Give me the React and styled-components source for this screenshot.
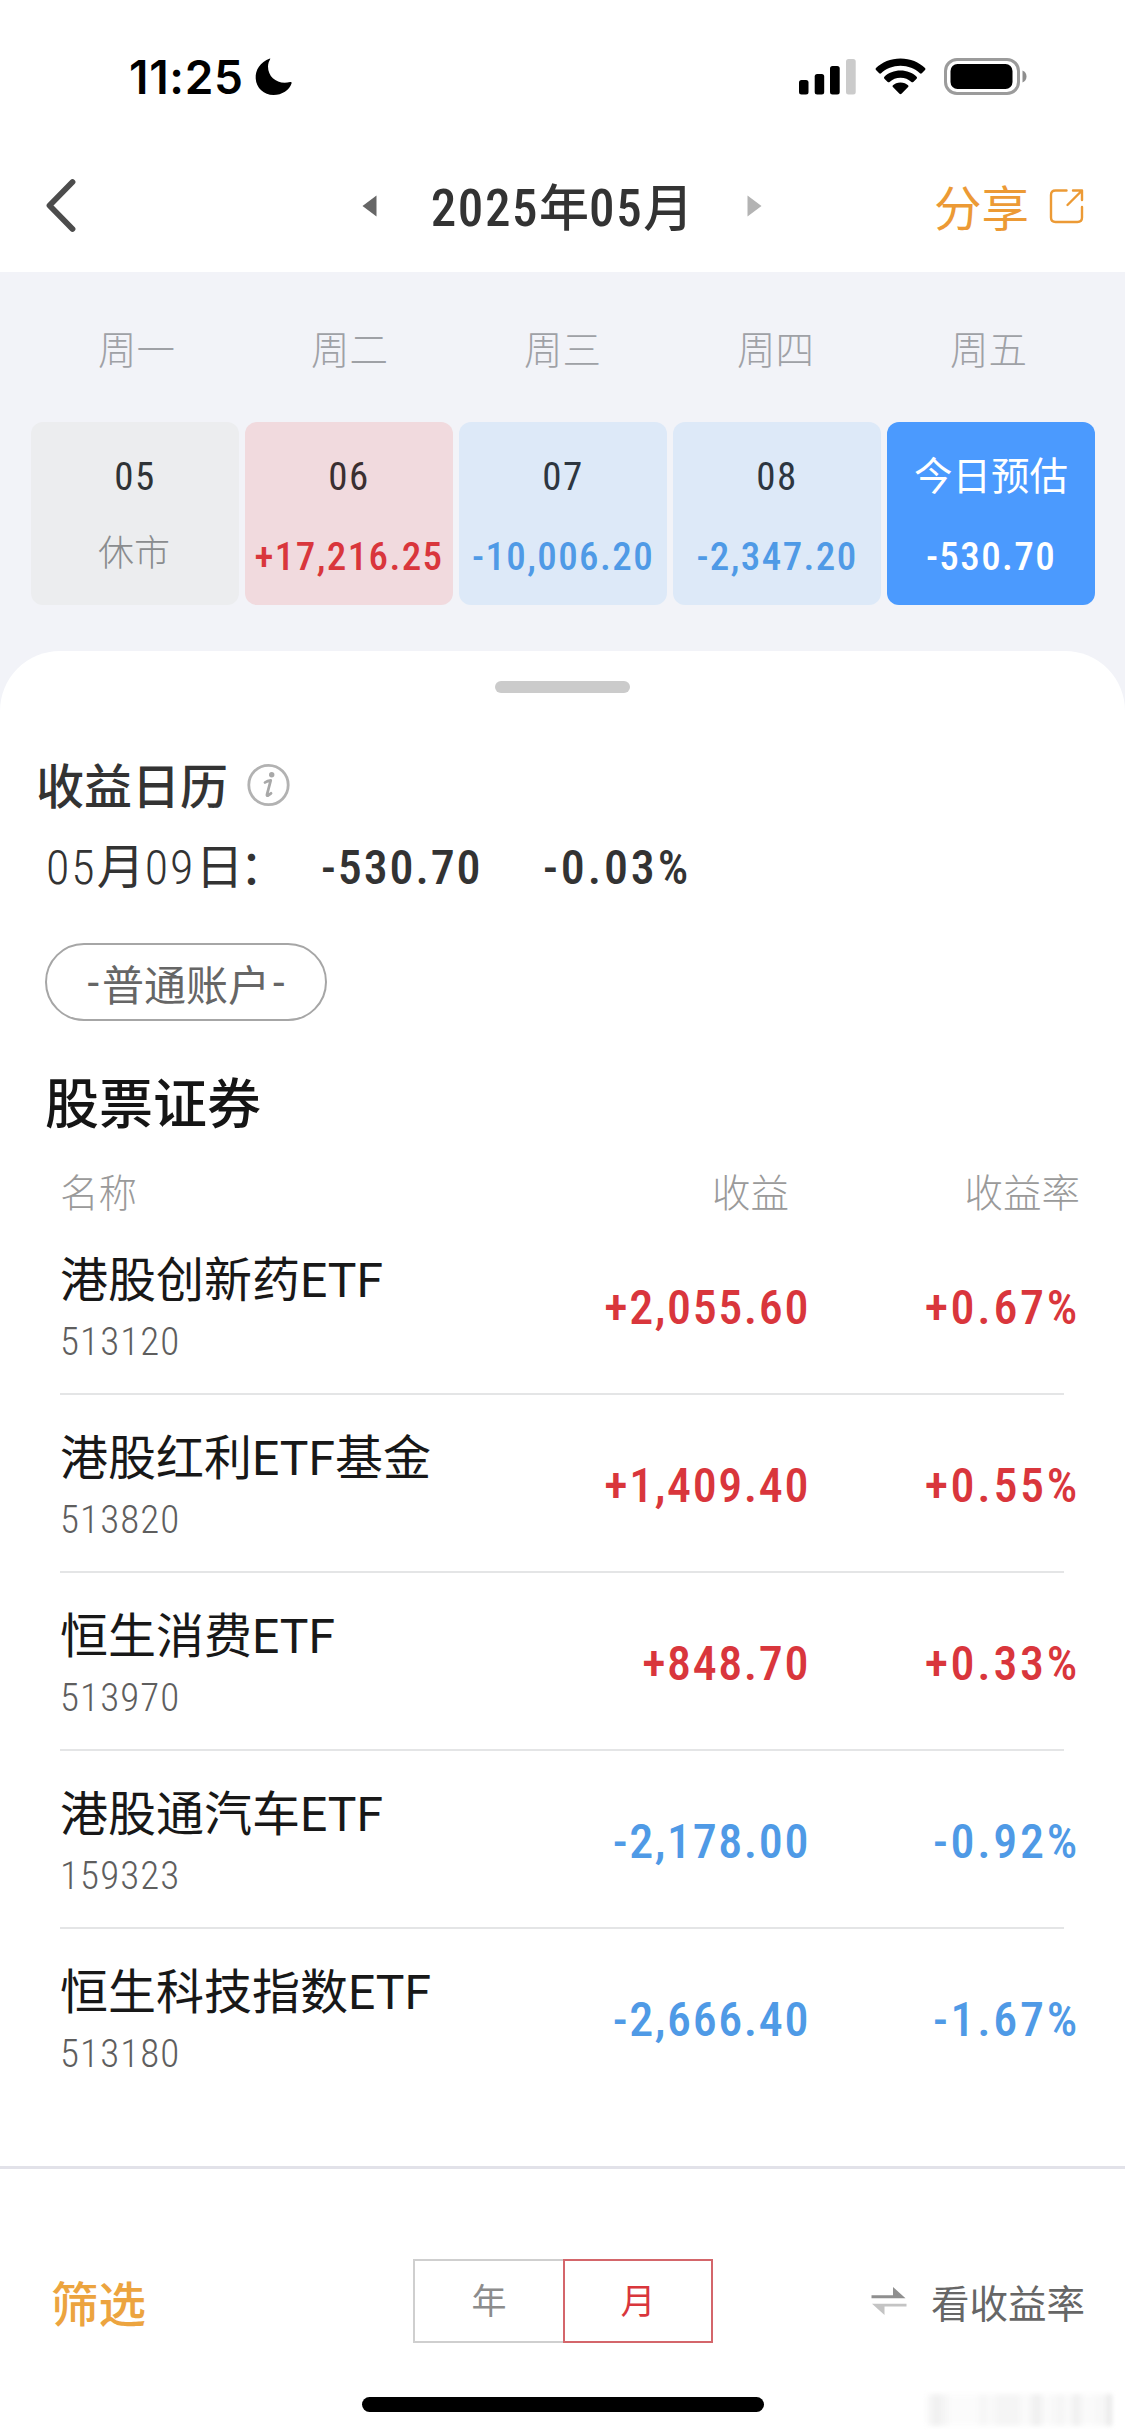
import React from "react";
import styled, { createGlobalStyle, css } from "styled-components";

const Global = createGlobalStyle`
  * { box-sizing: border-box; }
  body {
    margin: 0;
    background: #fff;
    font-family: Roboto, "Noto Sans CJK SC", sans-serif;
    white-space: nowrap;
  }
`;

const TONES = { up: "#d9363c", down: "#4f9ae6", white: "#fff" };

const Screen = styled.main`
  width: 1125px;
  height: 2436px;
  display: flex;
  flex-direction: column;
  overflow: hidden;
  background: #f2f3f8;
`;

const Num = styled.span`
  font-stretch: 75%;
  font-size: ${(p) => p.$size}px;
  font-weight: ${(p) => p.$weight || 500};
  letter-spacing: ${(p) => p.$track ?? 1.6}px;
  color: ${(p) => TONES[p.$tone] || "inherit"};
`;

/* Status bar */
const StatusBar = styled.header`
  height: 144px;
  padding: 9px 98px 0 129px;
  display: flex;
  align-items: center;
  justify-content: space-between;
  background: #fff;
`;
const Clock = styled.div`
  display: flex;
  align-items: center;
  gap: 11px;
  font: 600 46px/60px Inter, sans-serif;
  letter-spacing: 0.7px;
  color: #000;
`;
const Indicators = styled.div`
  display: flex;
  align-items: center;
`;

/* Navigation */
const NavBar = styled.nav`
  height: 128px;
  padding: 0 41px 4px 43px;
  display: grid;
  grid-template-columns: 319px 400px 1fr;
  align-items: center;
  background: #fff;
`;
const MonthPicker = styled.div`
  display: flex;
  align-items: center;
  justify-content: space-between;
`;
const MonthTitle = styled.h1`
  margin: 6px 0 0;
  font-size: 50px;
  font-weight: 500;
  line-height: 64px;
  color: #333;
`;
const Share = styled.div`
  display: flex;
  align-items: center;
  justify-content: flex-end;
  gap: 20px;
  font-size: 47.5px;
  line-height: 64px;
  color: #ec9a35;
`;
const ShareLabel = styled.span`
  padding-top: 7px;
`;

/* Week strip */
const Weekdays = styled.div`
  height: 150px;
  padding: 0 0 0 30px;
  display: grid;
  grid-template-columns: repeat(5, 213px);
  align-items: center;
  text-align: center;
  font-size: 38.5px;
  font-weight: 300;
  color: #9fa1a6;
`;
const Week = styled.div`
  padding: 0 30px 46px 31px;
  display: grid;
  grid-template-columns: repeat(5, 1fr);
  gap: 6px;
`;
const cardKinds = {
  closed: css`background: #ecedef; color: #2f3336;`,
  up: css`background: #f1dade; color: #3a2f31;`,
  down: css`background: #dde9f8; color: #2d3640;`,
  today: css`background: #4b9afe; color: #fff;`,
};
const DayCard = styled.div`
  height: 183px;
  padding-top: 30px;
  border-radius: 12px;
  display: flex;
  flex-direction: column;
  align-items: center;
  gap: 30px;
  line-height: 50px;
  font-size: 38.5px;
  ${(p) => cardKinds[p.$kind]}
`;
const Closed = styled.span`
  margin: -3px 2px 0 0;
  font-size: 36px;
  font-weight: 300;
  color: #8a8c8e;
`;

/* Sheet */
const Sheet = styled.section`
  flex: 1;
  padding-top: 30px;
  border-radius: 60px 60px 0 0;
  background: #fff;
  display: flex;
  flex-direction: column;
`;
const Handle = styled.div`
  width: 135px;
  height: 12px;
  border-radius: 6px;
  background: #cbcbcb;
  align-self: center;
`;
const Heading = styled.h2`
  margin: 65px 0 0 36px;
  display: flex;
  align-items: center;
  gap: 19px;
  font-size: 48px;
  font-weight: 500;
  line-height: 60px;
  color: #333;
`;
const Summary = styled.div`
  margin: 20px 0 0 46px;
  display: grid;
  grid-template-columns: 275px 222px auto;
  font-size: 48px;
  line-height: 60px;
  color: #333;
`;
const Colon = styled.span`
  margin-left: -4px;
`;
const Account = styled.div`
  width: 282px;
  height: 78px;
  margin: 45px 0 0 45px;
  border: 2px solid #a6a6a6;
  border-radius: 39px;
  display: flex;
  align-items: center;
  justify-content: center;
  gap: 3px;
  font-size: 42px;
  color: #666;
`;
const SectionTitle = styled.h3`
  margin: 50px 0 0 45px;
  font-size: 54px;
  font-weight: 500;
  line-height: 70px;
  color: #151515;
`;
const TableHead = styled.div`
  margin: 29px 45px 0 60px;
  display: grid;
  grid-template-columns: 1fr 200px 291px;
  font-size: 38.5px;
  font-weight: 300;
  line-height: 47px;
  color: #9a9a9a;
`;
const HeadCell = styled.span`
  text-align: right;
`;
const Row = styled.div`
  height: 176px;
  margin: 0 45px 0 60px;
  display: grid;
  grid-template-columns: 1fr 250px 270px;
  align-items: center;
  line-height: 60px;
`;
const Value = styled(Num)`
  padding-top: 5px;
  text-align: right;
`;
const Divider = styled.hr`
  width: 1004px;
  height: 2px;
  margin: 0 0 0 60px;
  border: 0;
  background: #e4e5e6;
`;
const Fund = styled.div`
  padding-top: 9px;
  display: flex;
  flex-direction: column;
  gap: 5px;
`;
const FundName = styled.span`
  font-size: 48px;
  line-height: 60px;
  color: #181818;
`;
const Code = styled(Num)`
  line-height: 52px;
  color: #5e5e5e;
`;

/* Footer */
const Footer = styled.footer`
  height: 270px;
  border-top: 3px solid #e2e2e9;
  background: #fff;
  display: flex;
  flex-direction: column;
  align-items: center;
`;
const Toolbar = styled.div`
  width: 100%;
  height: 228px;
  padding: 36px 40px 0 51px;
  display: grid;
  grid-template-columns: 362px 300px 1fr;
  align-items: center;
`;
const Filter = styled.span`
  font-size: 47.5px;
  font-weight: 500;
  color: #eca43f;
`;
const Toggle = styled.div`
  display: grid;
  grid-template-columns: 1fr 1fr;
  height: 84px;
`;
const ToggleItem = styled.button`
  padding: 4px 0 0;
  border: 2px solid ${(p) => (p.$on ? "#d4666b" : "#cfcfcf")};
  ${(p) => !p.$on && "border-right: 0;"}
  background: #fff;
  font: 400 35px/60px Roboto, "Noto Sans CJK SC", sans-serif;
  color: ${(p) => (p.$on ? "#d9363c" : "#8c8c8c")};
`;
const RateSwitch = styled.div`
  display: flex;
  align-items: center;
  justify-content: flex-end;
  gap: 24px;
  font-size: 38.5px;
  color: #666;
`;
const HomeBar = styled.div`
  width: 402px;
  height: 15px;
  border-radius: 8px;
  background: #000;
`;
const Smudge = styled.div`
  position: absolute;
  left: 924px;
  top: 2394px;
  width: 188px;
  height: 32px;
  opacity: 0.6;
  filter: blur(2px);
  background: linear-gradient(90deg, #fff 0, #e6e6e6 12px, #fafafa 28px, #fafafa 50px, #f1f1f1 60px, #f8f8f8 66px, #efefef 76px, #efefef 92px, #fafafa 102px, #e4e4e4 113px, #fafafa 122px, #efefef 138px, #fafafa 144px, #e6e6e6 152px, #fafafa 162px, #f2f2f2 180px, #d8d8d8 187px);
`;

const Moon = () => (
  <svg width="38" height="38" viewBox="0 0 38 38">
    <path d="M15 0.5C5 4 0.3 12 0.7 20.500C1.200 30 9 37 18.500 37C27 37 34.500 32 36.600 25.200C36.800 24.300 36 23.700 35.100 24C23.500 27 13 20 13 8.500C13 5.700 14 3.500 15 1.600C15.400 0.700 15.400 0.300 15 0.500Z" fill="#000" />
  </svg>
);
const Signal = () => (
  <svg width="57" height="36" viewBox="0 0 57 36">
    <rect x="0" y="21" width="9.500" height="14.500" rx="2.500" />
    <rect x="15.700" y="15" width="9.500" height="20.500" rx="2.500" />
    <rect x="31" y="7" width="9.700" height="28.500" rx="2.500" />
    <rect x="47" y="0" width="9.700" height="35.500" rx="2.500" fill="#cbcbcb" />
  </svg>
);
const WifiArt = styled.svg`margin-left: 19px;`;
const Wifi = () => (
  <WifiArt width="51" height="37" viewBox="0 0 51 37">
    <path d="M25.500 0.500C35.300 0.500 44.200 4.300 50 10.100Q51 11.100 50 12.100L46.800 15.300Q45.900 16.200 44.900 15.300C39.900 10.600 33 7.800 25.500 7.800C18 7.800 11.100 10.600 6.100 15.300Q5.100 16.200 4.200 15.300L1 12.100Q0 11.100 1 10.100C6.800 4.300 15.700 0.500 25.500 0.500Z" />
    <path d="M25.500 12.600C31.900 12.600 37.600 15 41.600 18.700Q42.600 19.700 41.600 20.700L38.300 23.900Q37.400 24.800 36.400 23.900C33.500 21.400 29.700 19.800 25.500 19.800C21.300 19.800 17.500 21.400 14.600 23.900Q13.600 24.800 12.700 23.900L9.400 20.700Q8.400 19.700 9.400 18.700C13.400 15 19.100 12.600 25.500 12.600Z" />
    <path d="M25.500 24.500C28.700 24.500 31.300 25.600 33.100 27.300Q34 28.200 33.100 29.100L26.500 35.700Q25.500 36.600 24.500 35.700L17.900 29.100Q17 28.200 17.900 27.300C19.700 25.600 22.300 24.500 25.500 24.500Z" />
  </WifiArt>
);
const BatteryArt = styled.svg`margin-left: 18px;`;
const Battery = () => (
  <BatteryArt width="83" height="37" viewBox="0 0 83 37">
    <rect x="1.500" y="1.500" width="73" height="34" rx="11.500" fill="none" stroke="#9b9b9b" strokeWidth="3" />
    <rect x="6.500" y="6" width="62" height="25" rx="7" />
    <path d="M78.500 12.500C81 13.500 82.500 15.700 82.500 18.500S81 23.500 78.500 24.500Z" fill="#8e8e8e" />
  </BatteryArt>
);
const Back = () => (
  <svg width="36" height="58" viewBox="0 0 36 58">
    <path d="M29.500 5L6.500 28.500L29.500 52" fill="none" stroke="#4c4c4c" strokeWidth="5.800" strokeLinecap="round" strokeLinejoin="round" />
  </svg>
);
const Arrow = ({ flip }) => (
  <svg width="15" height="22" viewBox="0 0 15 22">
    <path d={flip ? "M0.500 0.500L14.500 11L0.500 21.500Z" : "M14.500 0.500L0.500 11L14.500 21.500Z"} fill={flip ? "#b3b3b3" : "#666"} />
  </svg>
);
const ShareIcon = () => (
  <svg width="35" height="36" viewBox="0 0 35 36" fill="none" stroke="#ec9a35" strokeWidth="2.400" strokeLinecap="round" strokeLinejoin="round">
    <path d="M17.500 2.500H6.500Q2 2.500 2 7V29.500Q2 34 6.500 34H28.500Q33 34 33 29.500V19" />
    <path d="M24 2.500H33V12M33 2.500L18.500 17" />
  </svg>
);
const InfoArt = styled.svg`margin-bottom: 7px;`;
const Info = () => (
  <InfoArt width="43" height="44" viewBox="0 0 43 44">
    <circle cx="21.500" cy="22" r="19.700" fill="none" stroke="#b2b2b2" strokeWidth="2.800" />
    <circle cx="24.700" cy="11.800" r="2.700" fill="#a8a8a8" />
    <path d="M18 19.500Q20.500 17.600 23.700 17.500L20 31.500Q19.700 33.200 21.200 32.400L24 30.300" fill="none" stroke="#a8a8a8" strokeWidth="2.800" strokeLinecap="round" strokeLinejoin="round" />
  </InfoArt>
);
const SwapIcon = () => (
  <svg width="36" height="28" viewBox="0 0 36 28">
    <path d="M0.500 8.200H22V0L34.500 11.300H0.500Z" fill="#8f8f8f" />
    <path d="M35.500 16.700H1L13.500 28V19.600H35.500Z" fill="#c4c4c4" />
  </svg>
);

const WEEKDAYS = ["周一", "周二", "周三", "周四", "周五"];
const DAYS = [
  { day: "05", kind: "closed" },
  { day: "06", kind: "up", value: "+17,216.25" },
  { day: "07", kind: "down", value: "-10,006.20" },
  { day: "08", kind: "down", value: "-2,347.20" },
  { label: "今日预估", kind: "today", value: "-530.70" },
];
const FUNDS = [
  ["港股创新药ETF", "513120", "+2,055.60", "+0.67%", "up"],
  ["港股红利ETF基金", "513820", "+1,409.40", "+0.55%", "up"],
  ["恒生消费ETF", "513970", "+848.70", "+0.33%", "up"],
  ["港股通汽车ETF", "159323", "-2,178.00", "-0.92%", "down"],
  ["恒生科技指数ETF", "513180", "-2,666.40", "-1.67%", "down"],
];

export default function App() {
  return (
    <>
      <Global />
      <Screen>
        <StatusBar>
          <Clock><span>11:25</span><Moon /></Clock>
          <Indicators><Signal /><Wifi /><Battery /></Indicators>
        </StatusBar>
        <NavBar>
          <Back />
          <MonthPicker>
            <Arrow />
            <MonthTitle><Num $size={51}>2025</Num>年<Num $size={51}>05</Num>月</MonthTitle>
            <Arrow flip />
          </MonthPicker>
          <Share><ShareLabel>分享</ShareLabel><ShareIcon /></Share>
        </NavBar>
        <Weekdays>
          {WEEKDAYS.map((d) => <span key={d}>{d}</span>)}
        </Weekdays>
        <Week>
          {DAYS.map((d) => (
            <DayCard key={d.kind + d.day} $kind={d.kind}>
              {d.label ? <span>{d.label}</span> : <Num $size={39} $weight={400} $track={1.5}>{d.day}</Num>}
              {d.value
                ? <Num $size={39} $track={1.4} $tone={d.kind === "today" ? "white" : d.kind}>{d.value}</Num>
                : <Closed>休市</Closed>}
            </DayCard>
          ))}
        </Week>
        <Sheet>
          <Handle />
          <Heading>收益日历<Info /></Heading>
          <Summary>
            <span>
              <Num $size={48} $weight={300} $track={2}>05</Num>月
              <Num $size={48} $weight={300} $track={2}>09</Num>日<Colon>：</Colon>
            </span>
            <Num $size={48} $track={1.9}>-530.70</Num>
            <Num $size={48} $track={2.9}>-0.03%</Num>
          </Summary>
          <Account><span>-</span><span>普通账户</span><span>-</span></Account>
          <SectionTitle>股票证券</SectionTitle>
          <TableHead><span>名称</span><HeadCell>收益</HeadCell><HeadCell>收益率</HeadCell></TableHead>
          {FUNDS.map(([name, code, amount, rate, tone], i) => (
            <React.Fragment key={code}>
              {i > 0 && <Divider />}
              <Row>
                <Fund>
                  <FundName>{name}</FundName>
                  <Code $size={39} $weight={300} $track={1.1}>{code}</Code>
                </Fund>
                <Value $size={48} $tone={tone}>{amount}</Value>
                <Value $size={48} $track={2.7} $tone={tone}>{rate}</Value>
              </Row>
            </React.Fragment>
          ))}
        </Sheet>
        <Footer>
          <Toolbar>
            <Filter>筛选</Filter>
            <Toggle><ToggleItem>年</ToggleItem><ToggleItem $on>月</ToggleItem></Toggle>
            <RateSwitch><SwapIcon /><span>看收益率</span></RateSwitch>
          </Toolbar>
          <HomeBar />
        </Footer>
      </Screen>
      <Smudge />
    </>
  );
}
